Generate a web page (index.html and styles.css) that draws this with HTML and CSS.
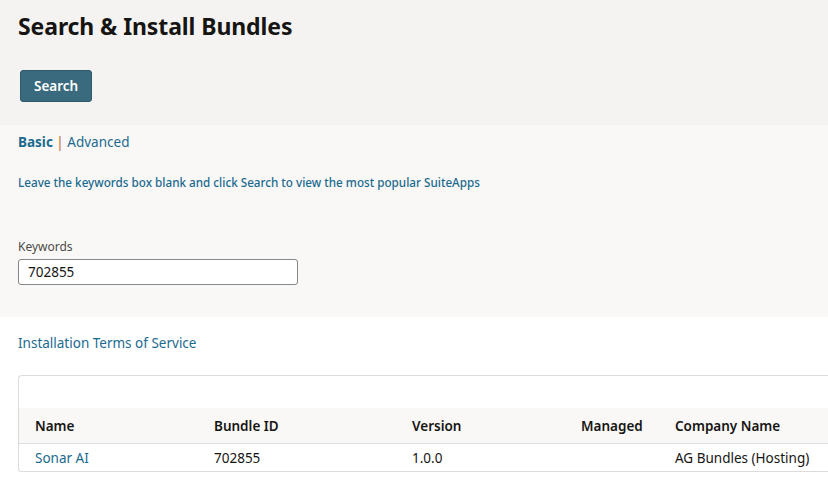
FILE: index.html
```html
<!DOCTYPE html>
<html lang="en">
<head>
  <meta charset="UTF-8" />
  <meta name="viewport" content="width=device-width, initial-scale=1.0"/>
  <title>Search &amp; Install Bundles</title>
  <link rel="stylesheet" href="styles.css">
</head>
<body>
  <div class="page-head">
    <h1>Search &amp; Install Bundles</h1>
    <button class="btn-primary" type="button">Search</button>
  </div>

  <div class="search-form">
    <div class="mode-tabs">
      <a href="#" class="tab active">Basic</a>
      <span class="sep">|</span>
      <a href="#" class="tab">Advanced</a>
    </div>

    <p class="hint">Leave the keywords box blank and click Search to view the most popular SuiteApps</p>

    <label for="keywords" class="field-label">Keywords</label>
    <input type="text" id="keywords" class="field-input" value="702855">
  </div>

  <div class="results">
    <a href="#" class="terms-link">Installation Terms of Service</a>

    <div class="grid-box">
      <div class="grid-toolbar"></div>
      <table class="grid">
        <thead>
          <tr>
            <th class="col-name">Name</th>
            <th class="col-id">Bundle ID</th>
            <th class="col-ver">Version</th>
            <th class="col-managed">Managed</th>
            <th>Company Name</th>
          </tr>
        </thead>
        <tbody>
          <tr>
            <td><a href="#">Sonar AI</a></td>
            <td>702855</td>
            <td>1.0.0</td>
            <td></td>
            <td>AG Bundles (Hosting)</td>
          </tr>
        </tbody>
      </table>
    </div>
  </div>
</body>
</html>
```

FILE: styles.css
```css
body {
  font-family: 'Noto Sans', 'Open Sans', sans-serif;
  background: white;
  color: #161513;
  margin: 0;
  overflow: hidden;
}
a {
  color: #1b6a8f;
  text-decoration: none;
}
.page-head {
  background: #f4f3f1;
  padding: 10px 18px 21px;
  height: 94px;
}
h1 {
  font-size: 23px;
  font-weight: 700;
  margin: 0 0 28px;
  letter-spacing: -0.1px;
}
.btn-primary {
  background: #3a6a7e;
  color: white;
  border: 1px solid #2f5868;
  border-radius: 3px;
  font-family: inherit;
  font-size: 13.5px;
  font-weight: 600;
  padding: 0 13px;
  height: 32px;
  margin-left: 2px;
  cursor: pointer;
}
.search-form {
  background: #f9f8f6;
  padding: 8px 18px 30px;
  height: 154px;
}
.mode-tabs {
  font-size: 13.5px;
}
.tab.active {
  font-weight: 700;
}
.sep {
  color: #c2702c;
}
.hint {
  font-size: 11.7px;
  font-weight: 500;
  color: #1b6a8f;
  margin: 23px 0 48px;
}
.field-label {
  display: block;
  font-size: 12px;
  color: #4c4b49;
  margin-bottom: 4px;
}
.field-input {
  width: 280px;
  height: 26px;
  box-sizing: border-box;
  border: 1px solid #8a8886;
  border-radius: 3px;
  background: white;
  font-family: inherit;
  font-size: 13.5px;
  padding: 0 9px;
  color: #161513;
}
.results {
  padding: 14px 0 0 18px;
}
.terms-link {
  font-size: 13.5px;
}
.grid-box {
  margin-top: 22px;
  border: 1px solid #dedcda;
  border-right: none;
  border-radius: 4px 0 0 4px;
  box-shadow: 0 1px 1px rgba(0, 0, 0, 0.06);
}
.grid-toolbar {
  height: 32px;
}
.grid {
  width: 100%;
  border-collapse: collapse;
  font-size: 13.5px;
}
.grid th {
  background: #f9f8f6;
  text-align: left;
  font-weight: 600;
  height: 35px;
  padding: 0 0 0 16px;
  border-bottom: 1px solid #dedcda;
}
.grid td {
  height: 27px;
  padding: 0 0 0 16px;
}
.col-name {
  width: 163px;
}
.col-id {
  width: 182px;
}
.col-ver {
  width: 153px;
}
.col-managed {
  width: 78px;
}
```
